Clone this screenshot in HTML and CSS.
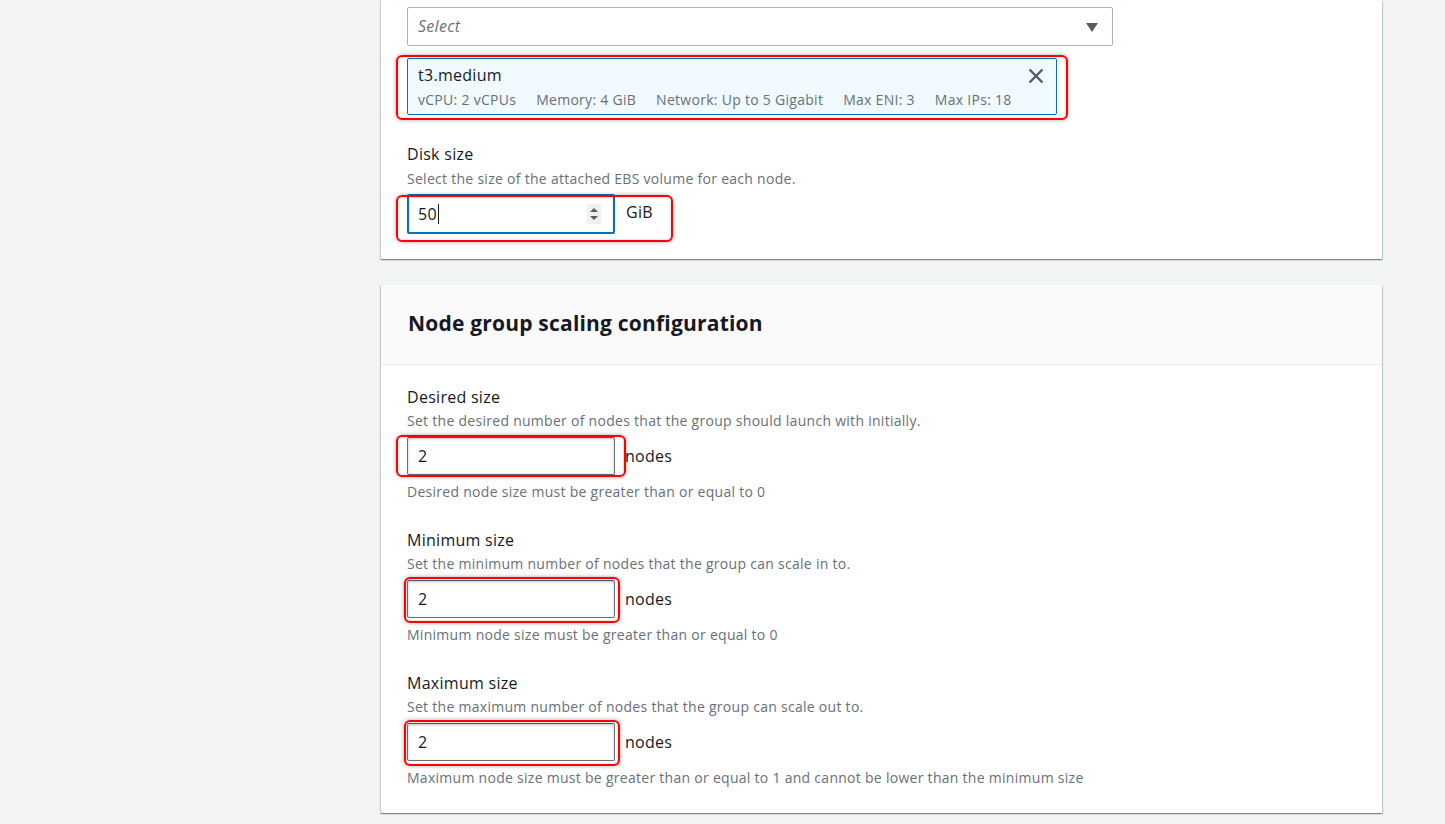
FILE: index.html
```html
<!DOCTYPE html>
<html lang="en">
<head>
<meta charset="utf-8">
<title>Node group configuration</title>
<link rel="stylesheet" href="styles.css">
</head>
<body>
<main class="page">
  <section class="card card-compute">
    <div class="card-body first">
      <div class="select">
        <span class="placeholder">Select</span>
        <svg class="caret" width="12" height="9" viewBox="0 0 12 9"><path d="M0 0 H12 L6 9 Z" fill="#545b64"/></svg>
      </div>
      <div class="token-wrap">
        <div class="token">
          <div class="token-text">
            <div class="token-title">t3.medium</div>
            <div class="token-tags">
              <span>vCPU: 2 vCPUs</span>
              <span>Memory: 4 GiB</span>
              <span>Network: Up to 5 Gigabit</span>
              <span>Max ENI: 3</span>
              <span>Max IPs: 18</span>
            </div>
          </div>
          <svg class="dismiss" width="16" height="16" viewBox="0 0 16 16"><path d="M1.5 1.5 L14.5 14.5 M14.5 1.5 L1.5 14.5" stroke="#545b64" stroke-width="2.4" fill="none"/></svg>
        </div>
        <span class="mark mark-token"></span>
      </div>

      <div class="field field-disk">
        <div class="label">Disk size</div>
        <div class="desc">Select the size of the attached EBS volume for each node.</div>
        <div class="control-row">
          <div class="input focused"><span class="value">50</span><span class="text-caret"></span>
            <span class="spinner"><svg width="12" height="20" viewBox="0 0 12 20"><path d="M2 8 L6 4 L10 8 Z M2 12 L6 16 L10 12 Z" fill="#545b64"/></svg></span>
          </div>
          <span class="unit unit-disk">GiB</span>
          <span class="mark mark-disk"></span>
        </div>
      </div>
    </div>
  </section>

  <section class="card card-scaling">
    <header class="card-header">
      <h2>Node group scaling configuration</h2>
    </header>
    <div class="card-body">
      <div class="field">
        <div class="label">Desired size</div>
        <div class="desc">Set the desired number of nodes that the group should launch with initially.</div>
        <div class="control-row">
          <div class="input"><span class="value">2</span></div>
          <span class="unit">nodes</span>
          <span class="mark mark-desired"></span>
        </div>
        <div class="constraint">Desired node size must be greater than or equal to 0</div>
      </div>
      <div class="field">
        <div class="label">Minimum size</div>
        <div class="desc">Set the minimum number of nodes that the group can scale in to.</div>
        <div class="control-row">
          <div class="input"><span class="value">2</span></div>
          <span class="unit">nodes</span>
          <span class="mark mark-min"></span>
        </div>
        <div class="constraint">Minimum node size must be greater than or equal to 0</div>
      </div>
      <div class="field">
        <div class="label">Maximum size</div>
        <div class="desc">Set the maximum number of nodes that the group can scale out to.</div>
        <div class="control-row">
          <div class="input"><span class="value">2</span></div>
          <span class="unit">nodes</span>
          <span class="mark mark-min"></span>
        </div>
        <div class="constraint">Maximum node size must be greater than or equal to 1 and cannot be lower than the minimum size</div>
      </div>
    </div>
  </section>
</main>
</body>
</html>
```

FILE: styles.css
```css
* { box-sizing: border-box; }
html, body {
  margin: 0;
  padding: 0;
  background: #f2f3f3;
  font-family: "Open Sans", "Noto Sans", sans-serif;
  color: #16191f;
  font-size: 14px;
  letter-spacing: 0.02em;
  height: 824px;
  overflow: hidden;
}
.page {
  margin-left: 381px;
  width: 1001px;
  display: flex;
  flex-direction: column;
  gap: 26px;
}
.card {
  background: #fff;
  box-shadow: 0 1px 1px 0 rgba(0, 28, 36, 0.3), 1px 1px 1px 0 rgba(0, 28, 36, 0.15), -1px 1px 1px 0 rgba(0, 28, 36, 0.15);
}
.card-body {
  padding: 21px 26px 25px 26px;
}
.card-body.first {
  padding-top: 7px;
}
.card-header {
  background: #fafafa;
  border-bottom: 1px solid #eaeded;
  height: 80px;
  display: flex;
  align-items: center;
  padding: 0 27px;
}
.card-header h2 {
  margin: 0 0 4px 0;
  font-size: 21px;
  font-weight: 700;
  line-height: 28px;
  letter-spacing: 0.2px;
}

.select {
  width: 706px;
  height: 39px;
  border: 1px solid #aab7b8;
  border-radius: 2px;
  display: flex;
  align-items: center;
  justify-content: space-between;
  padding: 0 14px 0 10px;
}
.placeholder {
  font-style: italic;
  font-size: 16px;
  color: #687078;
  margin-bottom: 2px;
}
.caret { margin-top: 1px; }

.token-wrap {
  position: relative;
  margin-top: 12px;
  width: 650px;
}
.token {
  background: #f1faff;
  border: 1px solid #0073bb;
  border-radius: 2px;
  height: 57px;
  display: flex;
  justify-content: space-between;
  align-items: flex-start;
  padding: 5px 12px 4px 10px;
}
.token-title {
  font-size: 16px;
  line-height: 22px;
}
.token-tags {
  margin-top: 4px;
  display: flex;
  gap: 20px;
  font-size: 14px;
  line-height: 20px;
  color: #687078;
}
.dismiss { margin-top: 4px; }

.mark {
  position: absolute;
  border: 2px solid #f00;
  border-radius: 6px;
  box-shadow: 0 0 4px rgba(0, 0, 0, 0.35), inset 0 0 3px rgba(0, 0, 0, 0.2);
  pointer-events: none;
}
.mark-token { left: -11px; top: -3px; right: -11px; bottom: -5px; }

.field { margin-top: 27px; }
.card-body .field:first-child { margin-top: 0; }
.field-disk { margin-top: 28px; }
.label {
  font-size: 16px;
  line-height: 22px;
}
.desc {
  margin-top: 2px;
  font-size: 14px;
  line-height: 22px;
  color: #687078;
}
.field-disk .desc { margin-top: 3px; line-height: 22px; }
.control-row {
  position: relative;
  margin-top: 5px;
  display: flex;
  align-items: center;
  width: max-content;
}
.field-disk .control-row { margin-top: 4px; }
.input {
  width: 208px;
  height: 38px;
  border: 1px solid #687078;
  border-top-color: #545b64;
  border-radius: 2px;
  box-shadow: inset 0 1px 3px rgba(0, 0, 0, 0.25);
  display: flex;
  align-items: center;
  padding-left: 10px;
  font-size: 16px;
  position: relative;
}
.input.focused {
  height: 40px;
  border: 2px solid #0073bb;
  box-shadow: inset 0 1px 3px rgba(0, 0, 0, 0.15);
  padding-left: 9px;
}
.text-caret {
  display: inline-block;
  width: 1px;
  height: 20px;
  background: #16191f;
  margin-left: 1px;
}
.spinner {
  position: absolute;
  right: 12px;
  top: 8px;
  width: 14px;
  height: 20px;
  background: #f0f0f0;
  display: flex;
  align-items: center;
  justify-content: center;
}
.unit {
  font-size: 16px;
  margin-left: 10px;
  line-height: 22px;
}
.unit-disk { margin-left: 11px; margin-top: -4px; }
.constraint {
  margin-top: 7px;
  font-size: 14px;
  line-height: 20px;
  color: #687078;
}
.mark-disk { left: -11px; top: 1px; width: 277px; height: 47px; }
.mark-desired { left: -11px; top: -2px; width: 230px; height: 42px; }
.mark-min { left: -3px; top: -3px; width: 216px; height: 46px; }
```
